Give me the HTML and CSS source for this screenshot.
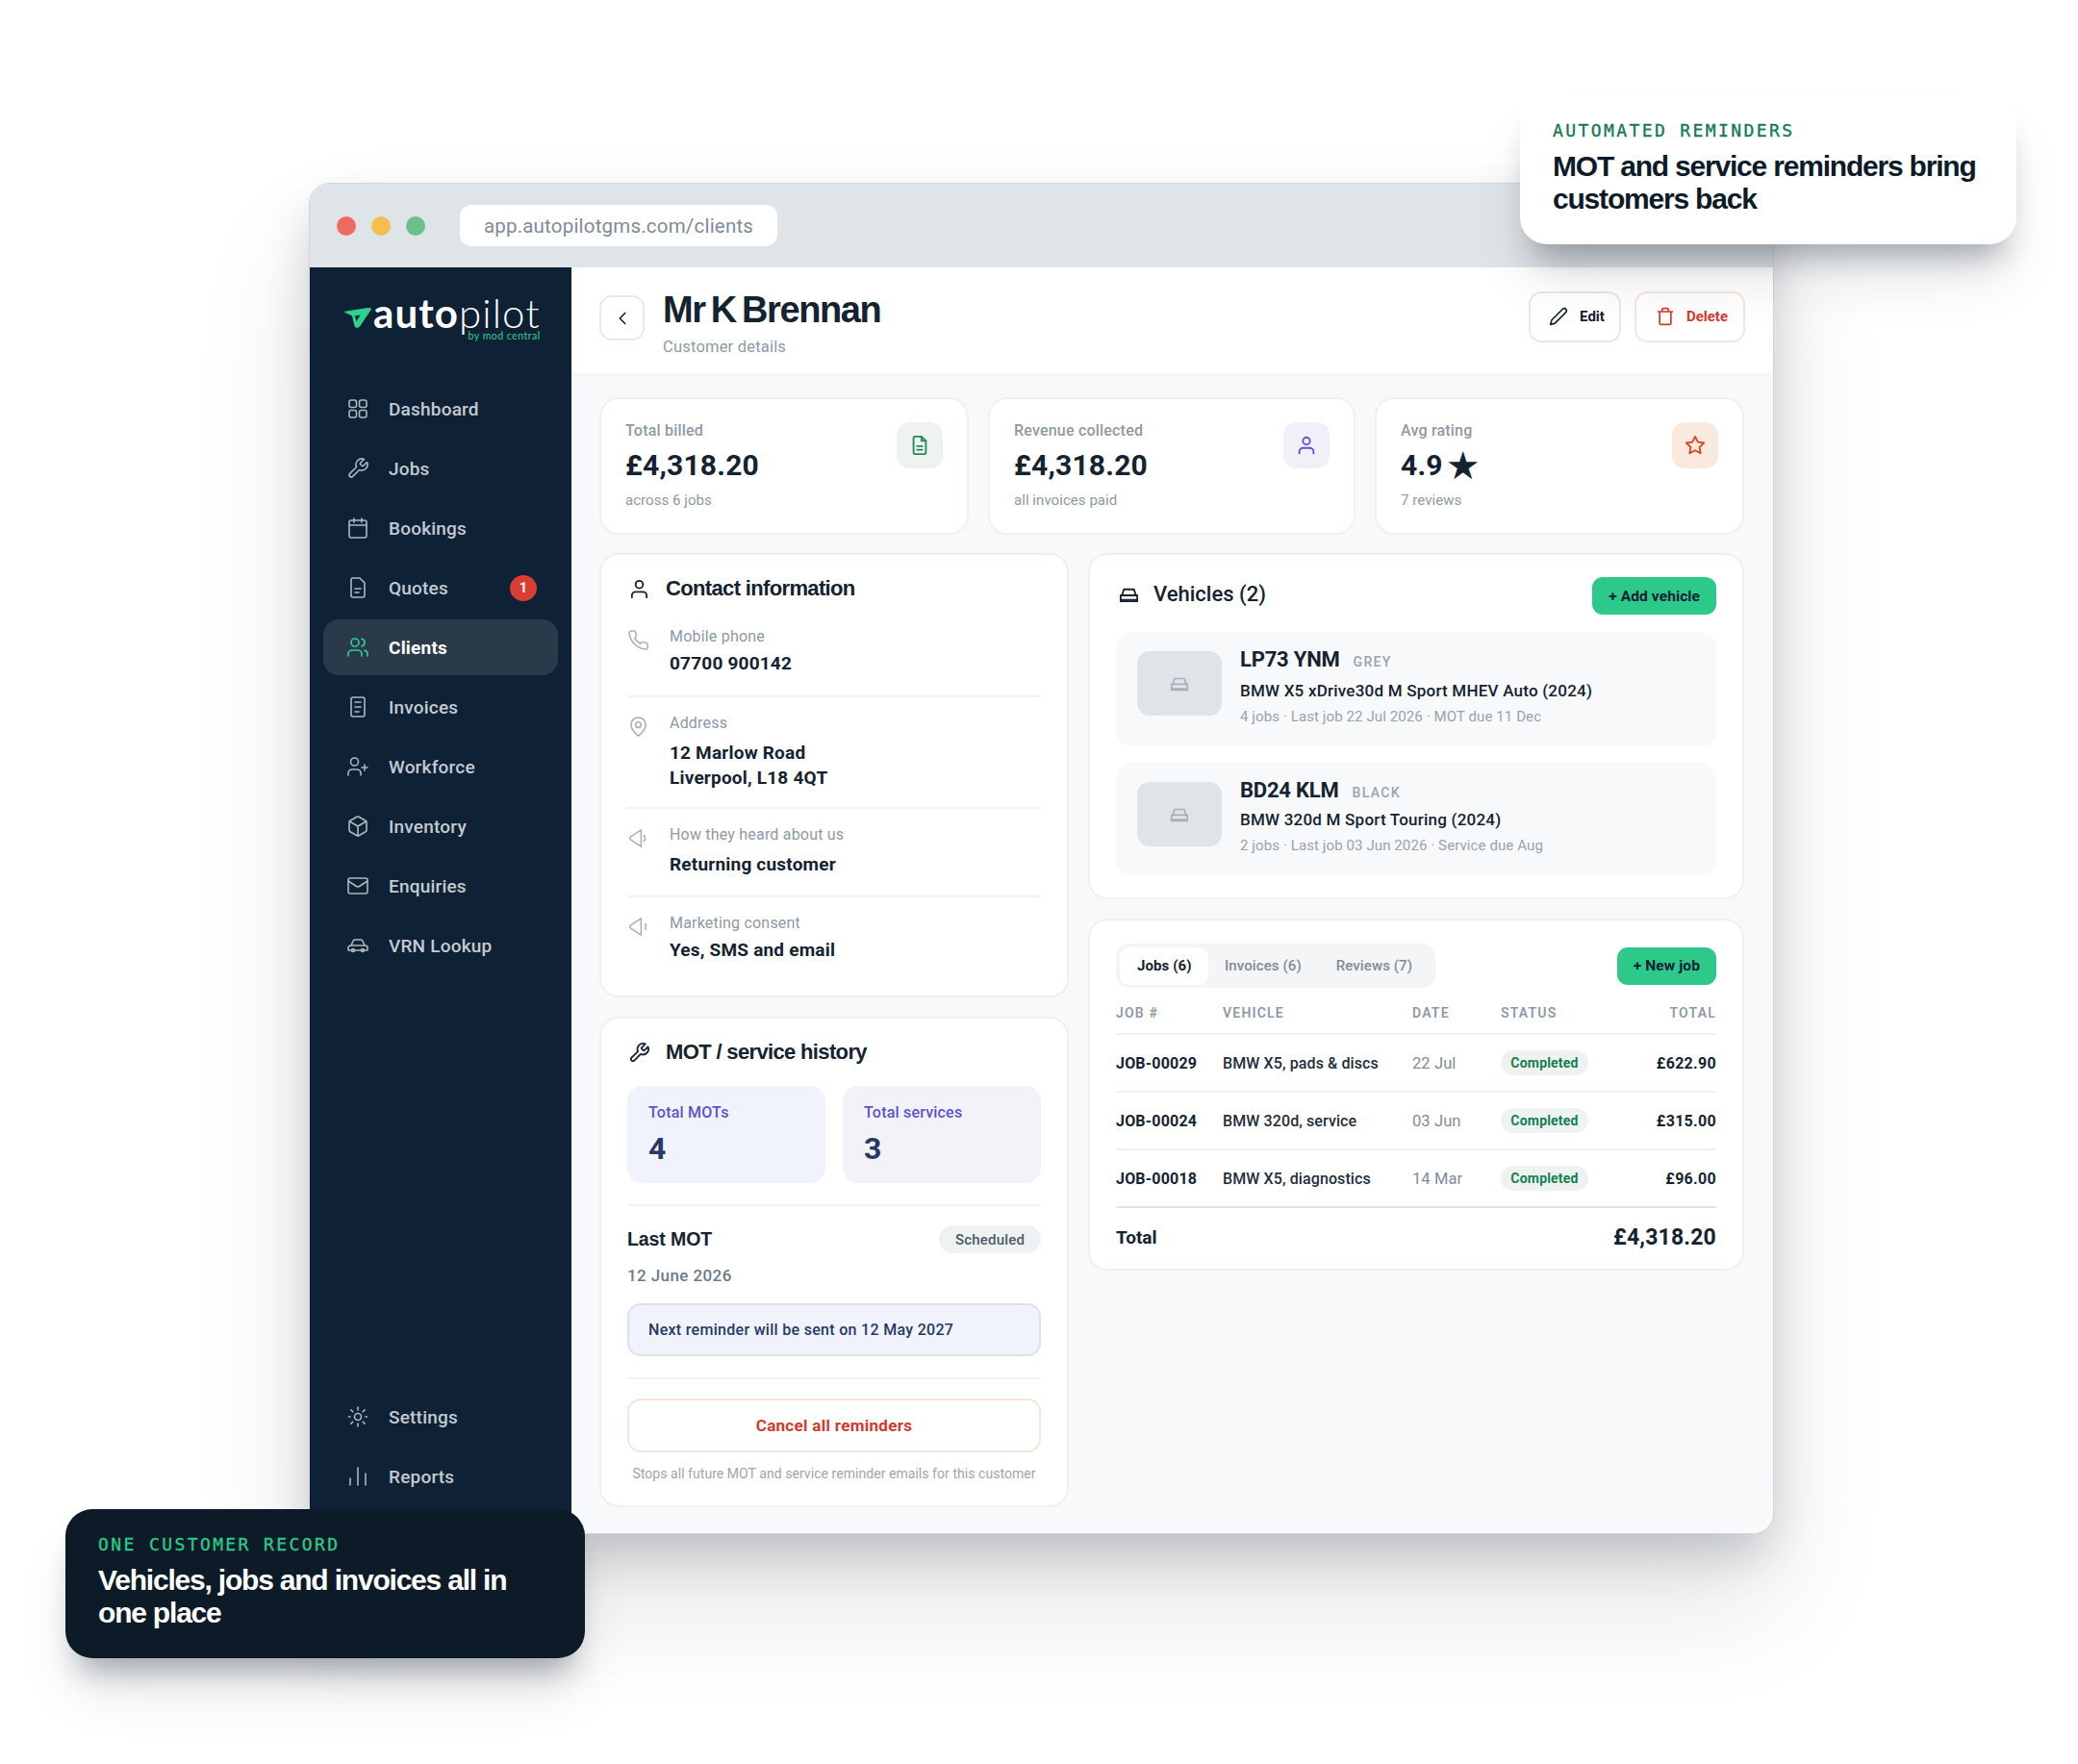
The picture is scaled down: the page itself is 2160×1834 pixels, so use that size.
FILE: index.html
```html
<!DOCTYPE html>
<html lang="en">
<head>
<meta charset="utf-8">
<title>Autopilot – Mr K Brennan</title>
<link rel="stylesheet" href="styles.css">
</head>
<body>
<svg class="sprite" aria-hidden="true">
  <symbol id="i-grid" viewBox="0 0 24 24"><rect x="3" y="3" width="7.5" height="7.5" rx="2"/><rect x="13.5" y="3" width="7.5" height="7.5" rx="2"/><rect x="13.5" y="13.5" width="7.5" height="7.5" rx="2"/><rect x="3" y="13.5" width="7.5" height="7.5" rx="2"/></symbol>
  <symbol id="i-wrench" viewBox="0 0 24 24"><path d="M14.7 6.3a1 1 0 0 0 0 1.4l1.6 1.6a1 1 0 0 0 1.4 0l3.77-3.77a6 6 0 0 1-7.94 7.94l-6.91 6.91a2.12 2.12 0 0 1-3-3l6.91-6.91a6 6 0 0 1 7.94-7.94l-3.76 3.76z"/></symbol>
  <symbol id="i-cal" viewBox="0 0 24 24"><rect x="3" y="4" width="18" height="18" rx="2"/><path d="M16 2v4M8 2v4M3 9h18"/></symbol>
  <symbol id="i-file" viewBox="0 0 24 24"><path d="M14 2H7a2 2 0 0 0-2 2v16a2 2 0 0 0 2 2h10a2 2 0 0 0 2-2V7z"/><path d="M9 13h6M9 17h4"/></symbol>
  <symbol id="i-users" viewBox="0 0 24 24"><path d="M16 21v-2a4 4 0 0 0-4-4H6a4 4 0 0 0-4 4v2"/><circle cx="9" cy="7" r="4"/><path d="M22 21v-2a4 4 0 0 0-3-3.87M16 3.13a4 4 0 0 1 0 7.75"/></symbol>
  <symbol id="i-invoice" viewBox="0 0 24 24"><rect x="5" y="2" width="14" height="20" rx="2"/><path d="M9 7h6M9 12h6M9 17h4"/></symbol>
  <symbol id="i-userplus" viewBox="0 0 24 24"><path d="M15 21v-2a4 4 0 0 0-4-4H6a4 4 0 0 0-4 4v2"/><circle cx="8.5" cy="7" r="4"/><path d="M19 10v6M16 13h6"/></symbol>
  <symbol id="i-box" viewBox="0 0 24 24"><path d="M21 16V8a2 2 0 0 0-1-1.73l-7-4a2 2 0 0 0-2 0l-7 4A2 2 0 0 0 3 8v8a2 2 0 0 0 1 1.73l7 4a2 2 0 0 0 2 0l7-4A2 2 0 0 0 21 16z"/><path d="M3.3 7l8.7 5 8.7-5M12 22V12"/></symbol>
  <symbol id="i-mail" viewBox="0 0 24 24"><rect x="2" y="4" width="20" height="16" rx="2"/><path d="m22 7-8.97 5.7a1.94 1.94 0 0 1-2.06 0L2 7"/></symbol>
  <symbol id="i-car" viewBox="0 0 24 24"><path d="M5 12l2-4.500A2 2 0 0 1 9 6h6a2 2 0 0 1 2 1.500l2 4.500"/><path d="M2 17v-2.500A2.500 2.500 0 0 1 4.500 12h15a2.500 2.500 0 0 1 2.500 2.500V17z"/><circle cx="7" cy="17" r="1.500"/><circle cx="17" cy="17" r="1.500"/></symbol>
  <symbol id="i-carfront" viewBox="0 0 24 24"><path d="M4.500 12.500l2-6.500h11l2 6.500"/><path d="M3 12.500h18V19H3z"/><path d="M3 17.500h18"/></symbol>
  <symbol id="i-sun" viewBox="0 0 24 24"><circle cx="12" cy="12" r="3.500"/><path d="M12 2v3M12 19v3M4.900 4.900l1.900 1.900M17.200 17.200l1.900 1.900M2.500 12h1.500M20 12h1.500M4.900 19.100l1.900-1.900M17.200 6.800l1.900-1.900"/></symbol>
  <symbol id="i-bars" viewBox="0 0 24 24"><path d="M4 21v-7M12 21V3M20 21v-12"/></symbol>
  <symbol id="i-chev" viewBox="0 0 24 24"><path d="m15 18-6-6 6-6"/></symbol>
  <symbol id="i-pencil" viewBox="0 0 24 24"><path d="M17 3a2.850 2.830 0 1 1 4 4L7.500 20.500 2 22l1.500-5.500Z"/></symbol>
  <symbol id="i-trash" viewBox="0 0 24 24"><path d="M3 6h18M19 6v14a2 2 0 0 1-2 2H7a2 2 0 0 1-2-2V6M8 6V4a2 2 0 0 1 2-2h4a2 2 0 0 1 2 2v2"/></symbol>
  <symbol id="i-star" viewBox="0 0 24 24"><polygon points="12 2 15.090 8.260 22 9.270 17 14.140 18.180 21.020 12 17.770 5.820 21.020 7 14.140 2 9.270 8.910 8.260 12 2"/></symbol>
  <symbol id="i-user" viewBox="0 0 24 24"><path d="M20 21v-2a4 4 0 0 0-4-4H8a4 4 0 0 0-4 4v2"/><circle cx="12" cy="7" r="4"/></symbol>
  <symbol id="i-doc" viewBox="0 0 24 24"><path d="M14 2H7a2 2 0 0 0-2 2v16a2 2 0 0 0 2 2h10a2 2 0 0 0 2-2V7z"/><path d="M14 2v5h5M9 13h6M9 17h6"/></symbol>
  <symbol id="i-phone" viewBox="0 0 24 24"><path d="M22 16.920v3a2 2 0 0 1-2.180 2 19.790 19.790 0 0 1-8.630-3.070 19.500 19.500 0 0 1-6-6 19.790 19.790 0 0 1-3.070-8.670A2 2 0 0 1 4.110 2h3a2 2 0 0 1 2 1.720 12.840 12.840 0 0 0 .7 2.810 2 2 0 0 1-.45 2.110L8.090 9.910a16 16 0 0 0 6 6l1.270-1.270a2 2 0 0 1 2.110-.45 12.840 12.840 0 0 0 2.810.7A2 2 0 0 1 22 16.920z"/></symbol>
  <symbol id="i-pin" viewBox="0 0 24 24"><path d="M20 10c0 6-8 12-8 12s-8-6-8-12a8 8 0 0 1 16 0Z"/><circle cx="12" cy="10" r="3"/></symbol>
  <symbol id="i-speak" viewBox="0 0 24 24"><path d="M15 3v18L3.500 13.500a2 2 0 0 1 0-3Z"/><path d="M18 9a4 4 0 0 1 0 6"/></symbol>
  <symbol id="i-speak2" viewBox="0 0 24 24"><path d="M15 3v18L3.500 13.500a2 2 0 0 1 0-3Z"/><path d="M20 9v6"/></symbol>
</svg>

<div class="stage">
  <div class="window">
    <header class="chrome">
      <span class="dot dot-red"></span><span class="dot dot-yellow"></span><span class="dot dot-green"></span>
      <div class="urlbar">app.autopilotgms.com/clients</div>
    </header>
    <div class="app">
      <aside class="sidebar">
        <div class="logo">
          <svg class="logo-mark" viewBox="0 0 30 22"><path d="M0 4 25 0Q29.500 0 29 1.500L17 19.500Q13.500 22.500 11.500 19L9 8.500Z" fill="#2fd08d"/><path d="M12 8.500 17.500 7.500 13.500 14z" fill="#0e2135"/></svg>
          <div class="logo-words"><div class="logo-name"><span class="logo-bold">auto</span><span>pilot</span></div><div class="logo-sub">by mod central</div></div>
        </div>
        <nav class="nav">
          <a class="nav-item"><svg class="ic"><use href="#i-grid"/></svg>Dashboard</a>
          <a class="nav-item"><svg class="ic"><use href="#i-wrench"/></svg>Jobs</a>
          <a class="nav-item"><svg class="ic"><use href="#i-cal"/></svg>Bookings</a>
          <a class="nav-item"><svg class="ic"><use href="#i-file"/></svg>Quotes<span class="nav-badge">1</span></a>
          <a class="nav-item nav-active"><svg class="ic"><use href="#i-users"/></svg>Clients</a>
          <a class="nav-item"><svg class="ic"><use href="#i-invoice"/></svg>Invoices</a>
          <a class="nav-item"><svg class="ic"><use href="#i-userplus"/></svg>Workforce</a>
          <a class="nav-item"><svg class="ic"><use href="#i-box"/></svg>Inventory</a>
          <a class="nav-item"><svg class="ic"><use href="#i-mail"/></svg>Enquiries</a>
          <a class="nav-item"><svg class="ic"><use href="#i-car"/></svg>VRN Lookup</a>
        </nav>
        <nav class="nav">
          <a class="nav-item"><svg class="ic"><use href="#i-sun"/></svg>Settings</a>
          <a class="nav-item"><svg class="ic"><use href="#i-bars"/></svg>Reports</a>
        </nav>
      </aside>

      <main class="main">
        <div class="pagehead">
          <button class="back"><svg class="ic ic-dark"><use href="#i-chev"/></svg></button>
          <div class="titles">
            <h1 class="title">Mr K Brennan</h1>
            <p class="subtitle">Customer details</p>
          </div>
          <div class="actions">
            <button class="act"><svg class="ic-sm"><use href="#i-pencil"/></svg>Edit</button>
            <button class="act act-del"><svg class="ic-sm"><use href="#i-trash"/></svg>Delete</button>
          </div>
        </div>

        <div class="content">
          <div class="stats">
            <section class="card stat">
              <div><div class="stat-label">Total billed</div><div class="stat-value">£4,318.20</div><div class="stat-sub">across 6 jobs</div></div>
              <span class="stat-ic ic-green"><svg class="ic-xs"><use href="#i-doc"/></svg></span>
            </section>
            <section class="card stat">
              <div><div class="stat-label">Revenue collected</div><div class="stat-value">£4,318.20</div><div class="stat-sub">all invoices paid</div></div>
              <span class="stat-ic ic-purple"><svg class="ic-xs"><use href="#i-user"/></svg></span>
            </section>
            <section class="card stat">
              <div><div class="stat-label">Avg rating</div><div class="stat-value">4.9 <span class="bigstar">★</span></div><div class="stat-sub">7 reviews</div></div>
              <span class="stat-ic ic-orange"><svg class="ic-xs"><use href="#i-star"/></svg></span>
            </section>
          </div>

          <div class="cols">
            <div class="col">
              <section class="card contact">
                <h2 class="card-title"><svg class="ic-title"><use href="#i-user"/></svg>Contact information</h2>
                <div class="info info-first">
                  <svg class="ic-info"><use href="#i-phone"/></svg>
                  <div><div class="info-label">Mobile phone</div><div class="info-val">07700 900142</div></div>
                </div>
                <div class="info info-tall info-addr">
                  <svg class="ic-info"><use href="#i-pin"/></svg>
                  <div><div class="info-label">Address</div><div class="info-val">12 Marlow Road<br>Liverpool, L18 4QT</div></div>
                </div>
                <div class="info info-tall info-heard">
                  <svg class="ic-info"><use href="#i-speak"/></svg>
                  <div><div class="info-label">How they heard about us</div><div class="info-val">Returning customer</div></div>
                </div>
                <div class="info">
                  <svg class="ic-info"><use href="#i-speak2"/></svg>
                  <div><div class="info-label">Marketing consent</div><div class="info-val">Yes, SMS and email</div></div>
                </div>
              </section>

              <section class="card mot">
                <h2 class="card-title"><svg class="ic-title"><use href="#i-wrench"/></svg>MOT / service history</h2>
                <div class="mot-boxes">
                  <div class="mot-box"><div class="mot-label">Total MOTs</div><div class="mot-num">4</div></div>
                  <div class="mot-box mot-box-alt"><div class="mot-label">Total services</div><div class="mot-num">3</div></div>
                </div>
                <div class="last">
                  <div class="last-row"><strong class="last-title">Last MOT</strong><span class="pill">Scheduled</span></div>
                  <div class="last-date">12 June 2026</div>
                  <div class="remind">Next reminder will be sent on 12 May 2027</div>
                </div>
                <div class="cancel-wrap">
                  <button class="cancel">Cancel all reminders</button>
                  <p class="note">Stops all future MOT and service reminder emails for this customer</p>
                </div>
              </section>
            </div>

            <div class="col">
              <section class="card vehicles">
                <div class="veh-head">
                  <h2 class="veh-title"><svg class="ic-title"><use href="#i-carfront"/></svg>Vehicles (2)</h2>
                  <button class="btn-green">+ Add vehicle</button>
                </div>
                <div class="veh veh-one">
                  <div class="thumb"><svg class="ic-thumb"><use href="#i-carfront"/></svg></div>
                  <div><div class="plate-row"><span class="plate">LP73 YNM</span><span class="colour">GREY</span></div><div class="model">BMW X5 xDrive30d M Sport MHEV Auto (2024)</div><div class="veh-sub">4 jobs · Last job 22 Jul 2026 · MOT due 11 Dec</div></div>
                </div>
                <div class="veh">
                  <div class="thumb"><svg class="ic-thumb"><use href="#i-carfront"/></svg></div>
                  <div><div class="plate-row"><span class="plate">BD24 KLM</span><span class="colour">BLACK</span></div><div class="model">BMW 320d M Sport Touring (2024)</div><div class="veh-sub">2 jobs · Last job 03 Jun 2026 · Service due Aug</div></div>
                </div>
              </section>

              <section class="card jobs">
                <div class="jobs-head">
                  <div class="tabs"><span class="tab tab-on">Jobs (6)</span><span class="tab">Invoices (6)</span><span class="tab">Reviews (7)</span></div>
                  <button class="btn-green">+ New job</button>
                </div>
                <table class="table">
                  <thead><tr><th class="c1">JOB #</th><th class="c2">VEHICLE</th><th class="c3">DATE</th><th class="c4">STATUS</th><th class="num">TOTAL</th></tr></thead>
                  <tbody>
                    <tr><td class="jobno">JOB-00029</td><td>BMW X5, pads &amp; discs</td><td class="date">22 Jul</td><td><span class="badge">Completed</span></td><td class="num amt">£622.90</td></tr>
                    <tr><td class="jobno">JOB-00024</td><td>BMW 320d, service</td><td class="date">03 Jun</td><td><span class="badge">Completed</span></td><td class="num amt">£315.00</td></tr>
                    <tr><td class="jobno">JOB-00018</td><td>BMW X5, diagnostics</td><td class="date">14 Mar</td><td><span class="badge">Completed</span></td><td class="num amt">£96.00</td></tr>
                  </tbody>
                </table>
                <div class="total"><span class="total-l">Total</span><span class="total-v">£4,318.20</span></div>
              </section>
            </div>
          </div>
        </div>
      </main>
    </div>
  </div>

  <aside class="callout callout-light">
    <div class="eyebrow">AUTOMATED REMINDERS</div>
    <div class="callout-text">MOT and service reminders bring customers back</div>
  </aside>
  <aside class="callout callout-dark">
    <div class="eyebrow">ONE CUSTOMER RECORD</div>
    <div class="callout-text">Vehicles, jobs and invoices all in one place</div>
  </aside>
</div>
</body>
</html>
```

FILE: styles.css
```css
* { box-sizing: border-box; }
html, body { margin: 0; background: #fff; }
body { font-family: Roboto, "Liberation Sans", sans-serif; color: #14232f; }
h1, h2, p { margin: 0; }
button { font: inherit; cursor: pointer; background: none; }
.sprite { position: absolute; width: 0; height: 0; }
svg { fill: none; stroke: currentColor; stroke-width: 1.8; stroke-linecap: round; stroke-linejoin: round; flex: none; }

.stage { position: relative; width: 2160px; height: 1834px; padding: 190px 0 0 321px; overflow: hidden; background: #fff; }

.window { width: 1523px; height: 1405px; border: 1px solid #cfd5da; border-radius: 22px; overflow: hidden; background: #fff; box-shadow: 0 24px 50px -6px rgba(13, 27, 40, .2), 0 70px 120px rgba(13, 27, 40, .12); }
.chrome { height: 87px; background: #dfe4e8; display: flex; align-items: center; padding: 0 0 0 28px; }
.dot { width: 20px; height: 20px; border-radius: 50%; margin-right: 16px; }
.dot-red { background: #ec6a5e; }
.dot-yellow { background: #f5bf4f; }
.dot-green { background: #6cc08b; margin-right: 36px; }
.urlbar { width: 330px; height: 43px; background: #fff; border-radius: 12px; display: flex; align-items: center; justify-content: center; font-size: 20.500px; color: #7d8b97; letter-spacing: .2px; }

.app { display: flex; height: 1317px; }

.sidebar { width: 272px; flex: none; background: #0e2135; display: flex; flex-direction: column; padding: 0 14px 31px; }
.logo { height: 118px; display: flex; align-items: flex-start; padding: 29px 0 0 21px; color: #fff; }
.logo-mark { width: 30px; height: 22px; stroke: none; margin-top: 13px; }
.logo-words { margin-left: 1px; }
.logo-name { font-family: Lato, sans-serif; font-weight: 300; font-size: 42px; line-height: 36px; letter-spacing: 1.100px; }
.logo-bold { font-weight: 700; }
.logo-sub { font-family: Lato, sans-serif; font-size: 10.500px; line-height: 13px; color: #2fd08d; text-align: right; letter-spacing: .5px; }
.nav { display: flex; flex-direction: column; gap: 4px; }
.nav:last-child { margin-top: auto; }
.nav-item { height: 58px; border-radius: 16px; display: flex; align-items: center; padding-left: 24px; gap: 20px; font-size: 19px; font-weight: 500; color: #c3cad1; letter-spacing: .2px; }
.nav-item .ic { width: 24px; height: 24px; stroke-width: 1.600; color: #aeb7bf; }
.nav-active { background: #2a3a4a; color: #fff; font-weight: 700; }
.nav-active .ic { color: #2fd08d; }
.nav-badge { margin-left: auto; margin-right: 22px; width: 28px; height: 27px; border-radius: 50%; background: #dc3d33; color: #fff; font-size: 14px; font-weight: 700; display: flex; align-items: center; justify-content: center; }

.main { flex: 1; background: #f7f9fb; display: flex; flex-direction: column; }
.pagehead { height: 112px; background: #fff; border-bottom: 1px solid #f1f3f5; display: flex; padding: 29px 29px 0; }
.back { width: 47px; height: 47px; border: 2px solid #e6eaee; border-radius: 13px; display: flex; align-items: center; justify-content: center; color: #14232f; padding: 0; background: #fff; }
.ic { width: 22px; height: 22px; }
.titles { margin-left: 19px; margin-top: -11px; }
.title { font-family: "Liberation Sans", Arial, sans-serif; font-size: 38px; font-weight: 700; line-height: 52px; letter-spacing: -1.400px; word-spacing: -3px; color: #14232f; }
.subtitle { font-size: 16.500px; line-height: 24px; color: #8d9aa5; letter-spacing: .2px; margin-top: 1px; }
.actions { margin-left: auto; display: flex; gap: 14px; margin-top: -4px; }
.act { height: 53px; border: 2px solid #e3e8ed; border-radius: 13px; background: #fff; padding: 0 15px 2px 19px; display: flex; align-items: center; gap: 12px; font-size: 15px; font-weight: 700; color: #14232f; }
.act-del { color: #d13a2f; border-color: #f8e4d8; padding: 0 16px 2px 20px; }
.ic-sm { width: 20px; height: 20px; stroke-width: 2; }

.content { padding: 23px 29px 0; display: flex; flex-direction: column; gap: 19px; }
.stats { display: grid; grid-template-columns: 384px 382px 384px; gap: 20px; }
.card { background: #fff; border: 2px solid #eef1f4; border-radius: 20px; }
.stat { height: 143px; padding: 21px 25px 0; display: flex; justify-content: space-between; align-items: flex-start; }
.stat-label { font-size: 16px; line-height: 24px; font-weight: 500; color: #8d9aa5; letter-spacing: .2px; }
.stat-value { font-size: 30px; line-height: 38px; font-weight: 700; margin-top: 5px; color: #14232f; letter-spacing: .2px; display: flex; align-items: center; gap: 3px; }
.bigstar { font-family: "DejaVu Sans", sans-serif; font-size: 40px; line-height: 38px; }
.stat-sub { font-size: 15px; line-height: 22px; margin-top: 6px; color: #8d9aa5; letter-spacing: .05px; }
.stat-ic { width: 48px; height: 48px; border-radius: 13px; display: flex; align-items: center; justify-content: center; margin-top: 3px; }
.ic-xs { width: 22px; height: 22px; stroke-width: 2; }
.ic-green { background: #eef3f2; color: #1f8a55; }
.ic-purple { background: #f1f0f9; color: #5a55c8; }
.ic-orange { background: #f9eadd; color: #d8402e; }

.cols { display: grid; grid-template-columns: 488px 682px; gap: 20px; }
.col { display: flex; flex-direction: column; gap: 20px; }
.card-title { font-family: "Liberation Sans", Arial, sans-serif; font-size: 22px; line-height: 30px; font-weight: 700; letter-spacing: -.65px; display: flex; align-items: center; gap: 16px; color: #14232f; }
.ic-title { width: 23px; height: 23px; stroke-width: 1.900; margin-left: 1px; }

.contact { height: 462px; padding: 20px 27px 0; }
.info { display: flex; gap: 21px; padding: 16px 0 20px; border-top: 2px solid #f1f4f7; }
.info-first { border-top: 0; margin-top: 8px; }
.info-addr { padding-bottom: 17px; }
.info-heard { padding-bottom: 19px; }
.ic-info { width: 23px; height: 23px; color: #a6b0b9; stroke-width: 1.600; margin-top: 3px; }
.info-label { font-size: 16px; line-height: 22px; color: #8d9aa5; letter-spacing: .2px; }
.info-val { font-size: 19px; line-height: 26px; font-weight: 700; margin-top: 4px; color: #14232f; letter-spacing: .2px; }
.info-tall .info-val { margin-top: 7px; }

.mot { height: 510px; padding: 20px 27px 0; }
.mot .card-title { margin-bottom: 20px; }
.mot-boxes { display: grid; grid-template-columns: 206px 206px; gap: 18px; }
.mot-box { height: 101px; background: #f0f3fb; border-radius: 16px; padding: 17px 22px 0; }
.mot-box-alt { background: #f3f2f8; }
.mot-label { font-size: 16px; line-height: 22px; font-weight: 500; color: #5a55c8; letter-spacing: .2px; }
.mot-num { font-size: 32px; line-height: 38px; font-weight: 700; color: #253a66; margin-top: 7px; }
.last { margin-top: 22px; border-top: 2px solid #f1f4f7; padding-top: 20px; }
.last-row { display: flex; justify-content: space-between; align-items: center; height: 29px; }
.last-title { font-family: "Liberation Sans", Arial, sans-serif; font-size: 19.500px; font-weight: 700; letter-spacing: -.1px; color: #14232f; }
.pill { height: 29px; width: 106px; border-radius: 15px; background: #eef2f3; color: #4a5a66; font-size: 15px; font-weight: 500; display: flex; align-items: center; justify-content: center; letter-spacing: .2px; }
.last-date { font-size: 17px; line-height: 24px; font-weight: 500; color: #6c7b87; margin-top: 11px; letter-spacing: .4px; }
.remind { height: 55px; margin-top: 17px; background: #f0f3fb; border: 2px solid #dde2ea; border-radius: 14px; padding-left: 20px; display: flex; align-items: center; font-size: 16px; font-weight: 500; color: #253a66; letter-spacing: .3px; }
.cancel-wrap { margin-top: 22px; border-top: 2px solid #f1f4f7; padding-top: 20px; }
.cancel { display: block; width: 100%; height: 56px; background: #fff; border: 2px solid #f8e4d8; border-radius: 14px; color: #d13a2f; font-size: 17px; font-weight: 700; letter-spacing: .3px; }
.note { font-size: 14px; line-height: 20px; text-align: center; color: #9aa6b0; margin-top: 12px; letter-spacing: .05px; }

.vehicles { height: 360px; padding: 23px 27px 0; }
.veh-head { display: flex; justify-content: space-between; align-items: center; height: 39px; margin-bottom: 18px; }
.veh-title { font-size: 22px; font-weight: 500; line-height: 30px; display: flex; align-items: center; gap: 14px; color: #14232f; margin: -3px 0 0 1px; }
.btn-green { height: 39px; padding: 0 17px; background: #2dc98a; border: 0; border-radius: 11px; font-size: 15.500px; font-weight: 700; color: #0e2135; letter-spacing: .1px; }
.veh { height: 117px; background: #f7f9fb; border-radius: 16px; padding: 20px 22px 0; display: flex; gap: 19px; }
.veh-one { height: 119px; margin-bottom: 17px; }
.veh-one .model { margin-top: 9px; }
.thumb { width: 88px; height: 67px; background: #dfe4e8; border-radius: 13px; display: flex; align-items: center; justify-content: center; color: #a6b0b9; }
.ic-thumb { width: 22px; height: 22px; stroke-width: 1.900; }
.plate-row { display: flex; align-items: baseline; gap: 14px; line-height: 18px; }
.plate { font-size: 22px; font-weight: 700; color: #14232f; letter-spacing: -.2px; }
.colour { font-size: 14px; font-weight: 500; color: #98a4ae; letter-spacing: 1.300px; }
.model { font-size: 17px; line-height: 24px; font-weight: 500; color: #14232f; margin-top: 7px; letter-spacing: .22px; }
.veh-sub { font-size: 15px; line-height: 22px; color: #98a4ae; margin-top: 4px; letter-spacing: .1px; }

.jobs { height: 366px; padding: 24px 27px 0; }
.jobs-head { display: flex; justify-content: space-between; align-items: center; height: 46px; }
.tabs { height: 46px; width: 332px; background: #f3f5f7; border-radius: 14px; padding: 3px 4px; display: flex; align-items: center; }
.tab { height: 39px; display: flex; align-items: center; padding: 0 18px; font-size: 15px; font-weight: 500; color: #7f8c97; letter-spacing: .1px; white-space: nowrap; }
.tab-on { background: #fff; border-radius: 11px; color: #14232f; font-weight: 700; width: 92px; margin-right: -1px; }
.table { width: 100%; border-collapse: collapse; table-layout: fixed; margin-top: 4px; }
.table th { height: 44px; font-size: 14px; font-weight: 600; color: #8d9aa5; letter-spacing: 1.200px; text-align: left; padding: 0; border-bottom: 2px solid #eef1f4; }
.table .c1 { width: 111px; }
.table .c2 { width: 197px; }
.table .c3 { width: 92px; }
.table .c4 { width: 120px; }
.table td { height: 60px; font-size: 16px; font-weight: 500; color: #1e2e3a; padding: 0; border-bottom: 2px solid #eef1f4; letter-spacing: .1px; }
.table tbody tr:last-child td { border-bottom-color: #dfe4e8; }
.table .jobno { font-weight: 700; color: #14232f; font-size: 16px; letter-spacing: .2px; }
.table .date { color: #7f8c97; font-weight: 400; font-size: 16.500px; }
.table .num { text-align: right; }
.table .amt { font-weight: 700; color: #14232f; font-size: 16px; letter-spacing: .3px; }
.badge { display: inline-flex; align-items: center; justify-content: center; width: 91px; height: 26px; border-radius: 13px; background: #eef3f2; color: #13804f; font-size: 14px; font-weight: 700; letter-spacing: .2px; }
.total { display: flex; justify-content: space-between; align-items: center; height: 60px; }
.total-l { font-size: 19px; font-weight: 700; color: #14232f; }
.total-v { font-size: 23px; font-weight: 700; color: #14232f; letter-spacing: .2px; }

.callout { position: absolute; border-radius: 28px; padding: 26px 20px 0 34px; }
.callout-light { left: 1580px; top: 99px; width: 516px; height: 155px; background: #fff; box-shadow: 0 26px 30px -14px rgba(13, 27, 40, .3), 0 40px 60px -10px rgba(13, 27, 40, .12); }
.callout-dark { left: 68px; top: 1569px; width: 540px; height: 155px; padding-right: 60px; background: #0d1b28; color: #fff; box-shadow: 0 26px 30px -14px rgba(13, 27, 40, .32), 0 40px 60px -10px rgba(13, 27, 40, .12); }
.eyebrow { font-family: "DejaVu Sans Mono", "Liberation Mono", monospace; font-size: 18px; line-height: 22px; letter-spacing: 2.400px; color: #137a52; -webkit-text-stroke: .35px currentColor; }
.callout-dark .eyebrow { color: #2dc98a; }
.callout-text { font-family: "Liberation Sans", Arial, sans-serif; font-weight: 700; font-size: 30px; line-height: 34px; letter-spacing: -1.200px; margin-top: 9px; color: #0d1b28; }
.callout-dark .callout-text { color: #fff; }
```
